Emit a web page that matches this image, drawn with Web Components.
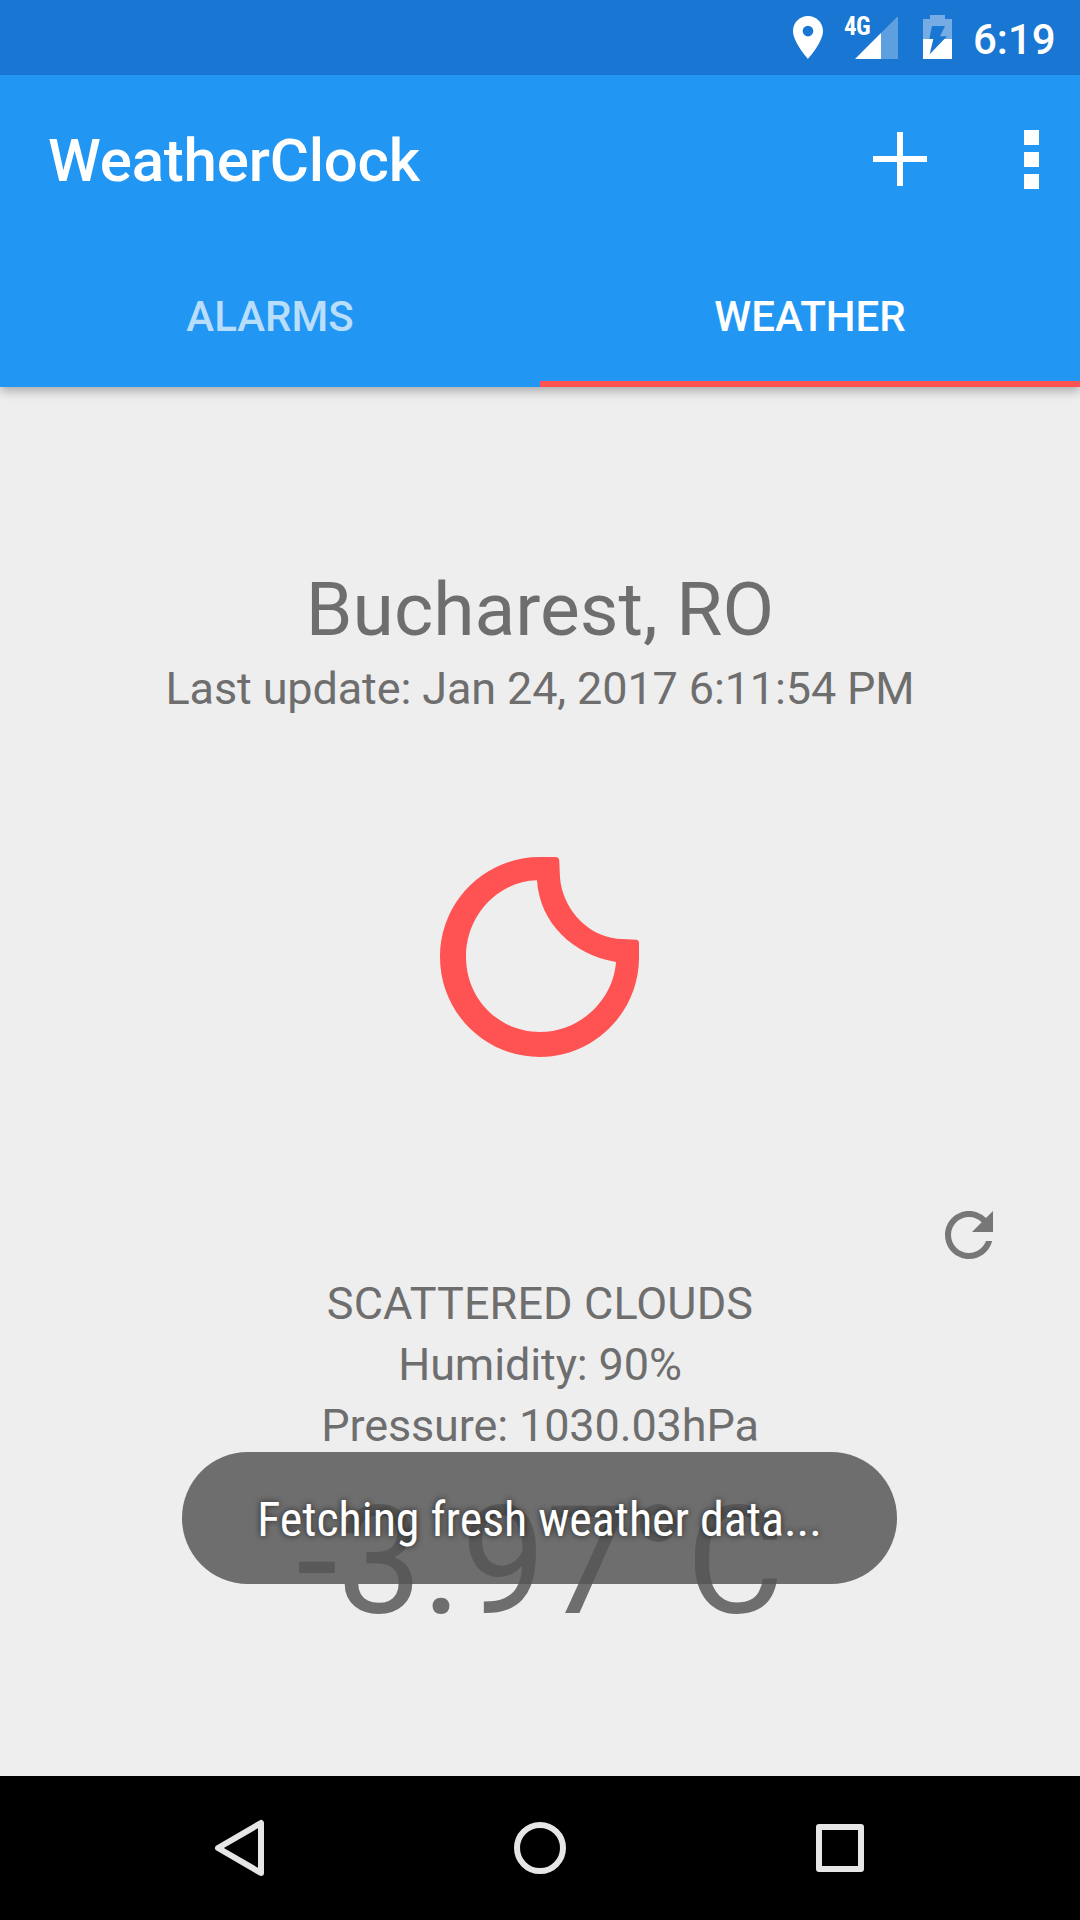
<!DOCTYPE html>
<html lang="en">
<head>
<meta charset="utf-8">
<title>WeatherClock</title>
<style>
html,body{margin:0;padding:0}
body{width:1080px;height:1920px;overflow:hidden;font-family:Roboto,"Noto Sans",sans-serif;background:#eee}
</style>
</head>
<body>
<weather-clock></weather-clock>
<script>
const define = (name, html) => {
  const t = document.createElement('template');
  t.innerHTML = html;
  customElements.define(name, class extends HTMLElement {
    constructor() {
      super();
      this.attachShadow({mode: 'open'}).appendChild(t.content.cloneNode(true));
    }
  });
};

define('status-bar', `<style>
:host{display:flex;height:75px;background:#1976d2;color:#fff;box-sizing:border-box;padding-right:27px;justify-content:flex-end}
svg{display:block;flex:none}
.net{font:700 25px/28px "Roboto Condensed",Roboto,sans-serif;font-stretch:75%;letter-spacing:-.6px;margin:13px -16px 0 21px;width:27px;height:28px;white-space:nowrap}
.sig{margin-top:17px}
.bat{margin:15px 21px 0 25px}
time{font-size:42px;font-weight:500;line-height:50px;margin-top:15px;width:80px;white-space:nowrap}
.pin{margin-top:16px}
</style>
<svg class="pin" width="30" height="43" viewBox="5 2 14 20" fill="#fff"><path d="M12 2C8.13 2 5 5.13 5 9c0 5.25 7 13 7 13s7-7.75 7-13c0-3.87-3.13-7-7-7zm0 9.5a2.5 2.5 0 0 1 0-5 2.5 2.5 0 0 1 0 5z"/></svg>
<span class="net">4G</span>
<svg class="sig" width="43" height="42"><path d="M26 16L43 -1V42H26z" fill="#fff" opacity=".3"/><path d="M0 42L26 16V42z" fill="#fff"/></svg>
<svg class="bat" width="29" height="44"><path d="M7 0H22V4H29V24H21.4L24 21.3H17L22 11H9L6.3 24H0V4H7z" fill="#fff" opacity=".4"/><path d="M0 24H10.3L6.7 39.3L21.4 24H29V44H0z" fill="#fff"/></svg>
<time>6:19</time>`);

define('app-bar', `<style>
:host{display:flex;height:168px;background:#2196f3;color:#fff;align-items:flex-start;box-sizing:border-box;padding-left:48px;padding-right:41px}
h1{margin:51px 0 0;font-size:60px;font-weight:500;line-height:70px;letter-spacing:-.2px;flex:1;white-space:nowrap}
.add{margin:57px 97px 0 0}.more{margin-top:55px}
svg{display:block;flex:none}
</style>
<h1><slot></slot></h1>
<svg class="add" width="54" height="54" fill="#fff"><path d="M24 0h6v24h24v6H30v24h-6V30H0v-6h24z"/></svg>
<svg class="more" width="15" height="59" fill="#fff"><path d="M0 0h15v15H0zM0 22h15v15H0zM0 44h15v15H0z"/></svg>`);

define('tab-item', `<style>
:host{display:flex;flex:1;justify-content:center;align-items:center;box-sizing:border-box;height:144px;border-bottom:6px solid transparent;padding-top:9px;font-size:42px;font-weight:500;line-height:50px;color:rgba(255,255,255,.7);text-transform:uppercase}
:host([selected]){color:#fff;border-bottom-color:#ff5252}
</style><slot></slot>`);

define('tab-bar', `<style>
:host{display:flex;height:144px;background:#2196f3}
</style><slot></slot>`);

define('weather-icon', `<style>:host{display:block}svg{display:block}</style>
<svg width="200" height="201" viewBox="60 51 600 603"><path fill="#ff5252" fill-rule="evenodd" d="M360 51H407Q418 52 418 65C419 86 419 110 422 130C437 216 506 287 590 296L650 299Q657 300 657 308V353C657 516 523 651 360 651C194 651 60 517 60 351C60 185 194 51 360 51ZM351 121C359 250 460 345 588 366C580 480 480 576 360 576C235 576 138 475 138 350C138 228 232 124 351 121Z"/></svg>`);

define('refresh-button', `<style>:host{display:block}svg{display:block}</style>
<svg width="72" height="72" viewBox="0 0 24 24" fill="#777"><path d="M17.65 6.35C16.2 4.9 14.21 4 12 4c-4.42 0-7.99 3.58-7.99 8s3.57 8 7.99 8c3.73 0 6.84-2.55 7.73-6h-2.08c-.82 2.33-3.04 4-5.65 4-3.31 0-6-2.69-6-6s2.69-6 6-6c1.66 0 3.14.69 4.22 1.78L13 11h7V4l-2.35 2.35z"/></svg>`);

define('weather-panel', `<style>
:host{display:flex;flex-direction:column;align-items:center;height:1389px;box-sizing:border-box;background:#eee;color:#6e6e6e;white-space:nowrap}
.city{font-size:75px;line-height:88px;margin-top:178px}
.sub{font-size:45px;line-height:54px;margin-top:9px;letter-spacing:-.13px}
weather-icon{margin-top:141px}
refresh-button{margin:141px 75px 0 0;align-self:flex-end}
.info{font-size:45px;line-height:61px;margin-top:2px;text-align:center;letter-spacing:-.13px}
.sky{letter-spacing:.1px}
.temp{font-size:150px;line-height:176px;margin-top:18px}
</style>
<div class="city">Bucharest, RO</div>
<div class="sub">Last update: Jan 24, 2017 6:11:54 PM</div>
<weather-icon></weather-icon>
<refresh-button></refresh-button>
<div class="info"><div class="sky">SCATTERED CLOUDS</div><div>Humidity: 90%</div><div>Pressure: 1030.03hPa</div></div>
<div class="temp">-3.97°C</div>`);

define('toast-message', `<style>
:host{position:absolute;left:182px;top:1452px;width:715px;height:132px;border-radius:66px;background:rgba(85,85,85,.845);display:flex;align-items:center;justify-content:center;color:#fff;font:400 48px/56px "Roboto Condensed",Roboto,sans-serif;font-stretch:75%;letter-spacing:-.04px;white-space:nowrap;text-shadow:0 0 6px rgba(0,0,0,.7)}
span{padding-top:4px}
</style><span><slot></slot></span>`);

define('nav-bar', `<style>
:host{display:flex;height:144px;background:#000;justify-content:space-between;align-items:center;box-sizing:border-box;padding:0 210px}
svg{display:block}
</style>
<svg width="60" height="60" fill="none" stroke="#e6e6e6" stroke-width="6" stroke-linejoin="round"><path d="M51 5V55L8 30z"/></svg>
<svg width="60" height="60" fill="none" stroke="#e6e6e6" stroke-width="6"><circle cx="30" cy="30" r="23"/></svg>
<svg width="60" height="60" fill="none" stroke="#e6e6e6" stroke-width="6" stroke-linejoin="round"><rect x="9" y="9" width="42" height="42"/></svg>`);

define('weather-clock', `<style>
:host{display:block;position:relative;width:1080px;height:1920px;overflow:hidden}
header{position:relative;z-index:1;box-shadow:0 4px 10px rgba(0,0,0,.29)}
</style>
<header><status-bar></status-bar><app-bar>WeatherClock</app-bar>
<tab-bar><tab-item>Alarms</tab-item><tab-item selected>Weather</tab-item></tab-bar></header>
<weather-panel></weather-panel>
<nav-bar></nav-bar>
<toast-message>Fetching fresh weather data...</toast-message>`);
</script>
</body>
</html>
